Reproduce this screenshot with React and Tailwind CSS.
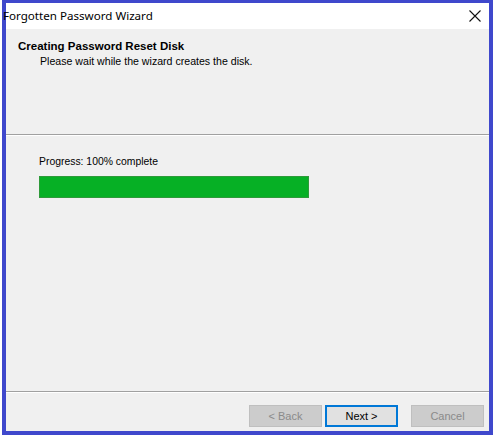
export default function App() {
  return (
    <div className="h-[435px] w-[493px] bg-white pl-[2px]" style={{ fontFamily: '"Liberation Sans", Arial, sans-serif' }}>
      <div className="flex h-full w-full flex-col border-t-[3px] border-l-[4px] border-r-[4px] border-b-[4px] border-[#3f48cc] bg-[#f0f0f0]">
        {/* title bar */}
        <div className="flex h-[26px] shrink-0 items-center justify-between bg-white">
          <span className="-ml-[3px] text-[11.6px] leading-none text-black" style={{ fontFamily: '"Noto Sans", sans-serif' }}>Forgotten Password Wizard</span>
          <svg width="12" height="12" viewBox="0 0 12 12" className="mr-[8px]">
            <path d="M0.5 0.5 L11.5 11.5 M11.5 0.5 L0.5 11.5" stroke="#111" strokeWidth="1.1" fill="none" />
          </svg>
        </div>
        {/* header */}
        <div className="flex h-[105px] shrink-0 flex-col pl-[12px] pt-[10px]">
          <span className="text-[11.5px] font-bold leading-[14px] text-black">Creating Password Reset Disk</span>
          <span className="pl-[22px] pt-[1px] text-[10.6px] leading-[14px] text-black">Please wait while the wizard creates the disk.</span>
        </div>
        <div className="h-px shrink-0 bg-[#a0a0a0]" />
        <div className="h-px shrink-0 bg-white" />
        {/* content */}
        <div className="flex flex-1 flex-col pl-[33px] pt-[19px]">
          <span className="text-[10.4px] leading-[14px] text-black">Progress: 100% complete</span>
          <div className="mt-[7px] h-[22px] w-[270px] border border-[#2e9a3a] bg-[#06b025]" />
        </div>
        <div className="h-px shrink-0 bg-[#a0a0a0]" />
        <div className="h-px shrink-0 bg-white" />
        {/* buttons */}
        <div className="flex h-[38px] shrink-0 items-start pt-[12px] pl-[243px]">
          <div className="flex h-[22px] w-[73px] items-center justify-center border border-[#bfbfbf] bg-[#cccccc] text-[11px] text-[#8a8a8a]">&lt; Back</div>
          <div className="ml-[3px] flex h-[22px] w-[73px] items-center justify-center border-2 border-[#0078d7] bg-[#e1e1e1] text-[11px] text-black">Next &gt;</div>
          <div className="ml-[13px] flex h-[22px] w-[73px] items-center justify-center border border-[#bfbfbf] bg-[#cccccc] text-[11px] text-[#8a8a8a]">Cancel</div>
        </div>
      </div>
    </div>
  );
}
